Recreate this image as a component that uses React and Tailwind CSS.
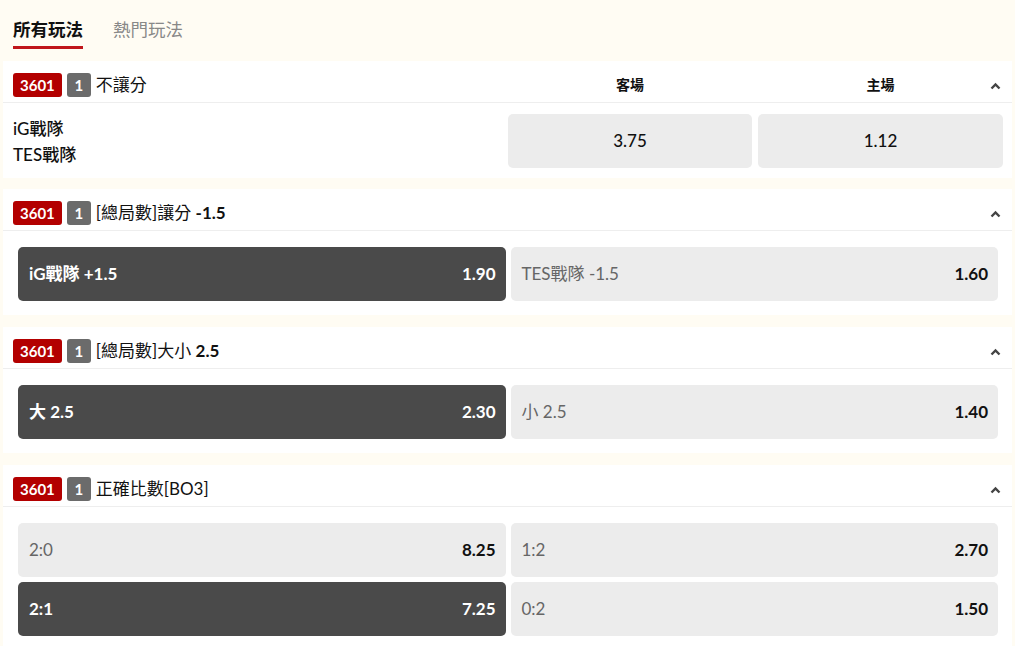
import React from 'react';

const FONT = "font-['Lato','Noto_Sans_CJK_TC',sans-serif]";

function Caret() {
  return (
    <svg width="11" height="8" viewBox="0 0 11 8" className="absolute right-[11px] top-[21px]">
      <path d="M1.5 6.5 L5.5 2.5 L9.5 6.5" fill="none" stroke="#444" strokeWidth="2.4" strokeLinejoin="miter" />
    </svg>
  );
}

function Badges() {
  return (
    <>
      <span className="h-[24px] px-[7px] rounded-[3px] bg-[#b30000] text-white font-bold text-[15px] leading-[24px]">3601</span>
      <span className="h-[24px] w-[24px] ml-[5px] rounded-[3px] bg-[#6b6b6b] text-white font-bold text-[15px] leading-[24px] text-center">1</span>
    </>
  );
}

function Header({ title }) {
  return (
    <div className="relative h-[42px] flex items-center pt-[6px] px-[10px] border-b border-[#eeeeee]">
      <Badges />
      <span className="ml-[5px] text-[17px] text-[#111]">{title}</span>
      <Caret />
    </div>
  );
}

function Odd({ label, value, dark }) {
  return (
    <div
      className={
        dark
          ? 'h-[54px] rounded-[5px] bg-[#4a4a4a] flex items-center justify-between pl-[11px] pr-[10px] text-white font-bold text-[17px]'
          : 'h-[54px] rounded-[5px] bg-[#ececec] flex items-center justify-between pl-[11px] pr-[10px] text-[17px]'
      }
    >
      <span className={dark ? '' : 'text-[#666]'}>{label}</span>
      <span className={dark ? '' : 'text-[#111] font-bold'}>{value}</span>
    </div>
  );
}

function Card({ title, rows }) {
  return (
    <div className="mx-[3px] bg-white mb-[12px]">
      <Header title={title} />
      <div className="pt-[16px] pb-[14px] pl-[15px] pr-[14px] flex flex-col gap-[5px]">
        {rows.map((r, i) => (
          <div key={i} className="grid grid-cols-2 gap-[5px]">
            <Odd {...r[0]} />
            <Odd {...r[1]} />
          </div>
        ))}
      </div>
    </div>
  );
}

export default function App() {
  return (
    <div className={`min-h-screen bg-[#fffcf3] ${FONT}`}>
      {/* Tabs */}
      <div className="h-[61px] flex gap-[30px] px-[13px]">
        <div className="pt-[19px]">
          <div className="text-[17.5px] leading-[22px] font-bold text-[#111] pb-[5px] border-b-[3px] border-[#c0161a]">所有玩法</div>
        </div>
        <div className="pt-[19px]">
          <div className="text-[17.5px] leading-[22px] text-[#888]">熱門玩法</div>
        </div>
      </div>

      {/* 不讓分 */}
      <div className="mx-[3px] bg-white mb-[11px]">
        <div className="relative h-[42px] grid grid-cols-[1fr_244px_245px] gap-[6px] pt-[6px] pl-[10px] pr-[9px] border-b border-[#eeeeee]">
          <div className="flex items-center">
            <Badges />
            <span className="ml-[5px] text-[17px] text-[#111]">不讓分</span>
          </div>
          <div className="flex items-center justify-center text-[14px] font-bold text-[#111]">客場</div>
          <div className="flex items-center justify-center text-[14px] font-bold text-[#111]">主場</div>
          <Caret />
        </div>
        <div className="grid grid-cols-[1fr_244px_245px] gap-[6px] pl-[10px] pr-[9px] pt-[11px] pb-[10px]">
          <div className="flex flex-col justify-center pt-[1px] text-[17px] leading-[26px] text-[#111] font-medium">
            <span>iG戰隊</span>
            <span>TES戰隊</span>
          </div>
          <div className="h-[54px] rounded-[5px] bg-[#ececec] flex items-center justify-center text-[17px] font-medium text-[#111]">3.75</div>
          <div className="h-[54px] rounded-[5px] bg-[#ececec] flex items-center justify-center text-[17px] font-medium text-[#111]">1.12</div>
        </div>
      </div>

      <Card
        title={<>[總局數]讓分 <span className="font-bold">-1.5</span></>}
        rows={[[{ label: 'iG戰隊 +1.5', value: '1.90', dark: true }, { label: 'TES戰隊 -1.5', value: '1.60' }]]}
      />
      <Card
        title={<>[總局數]大小 <span className="font-bold">2.5</span></>}
        rows={[[{ label: '大 2.5', value: '2.30', dark: true }, { label: '小 2.5', value: '1.40' }]]}
      />
      <Card
        title="正確比數[BO3]"
        rows={[
          [{ label: '2:0', value: '8.25' }, { label: '1:2', value: '2.70' }],
          [{ label: '2:1', value: '7.25', dark: true }, { label: '0:2', value: '1.50' }],
        ]}
      />
    </div>
  );
}
